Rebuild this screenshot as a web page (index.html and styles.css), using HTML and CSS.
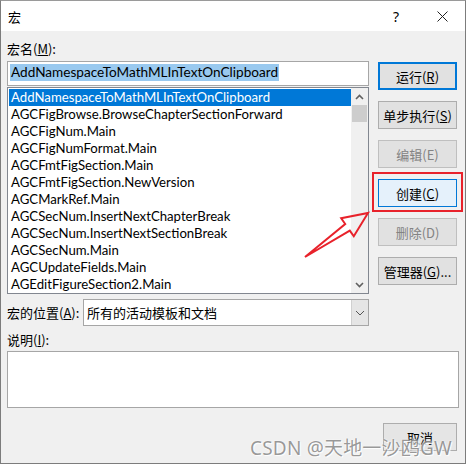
FILE: index.html
```html
<!DOCTYPE html>
<html>
<head>
<meta charset="utf-8">
<link rel="stylesheet" href="styles.css">
</head>
<body>
<div class="window">
  <div class="titlebar">
    <span class="title">宏</span>
    <span class="help">?</span>
    <span class="close"><svg width="11" height="11" viewBox="0 0 11 11"><path d="M0.5 0.5 L10.5 10.5 M10.5 0.5 L0.5 10.5" stroke="#222" stroke-width="1" fill="none"/></svg></span>
  </div>
  <div class="content">
    <div class="label top-label">宏名(<u>M</u>):</div>
    <div class="main">
      <div class="leftcol">
        <div class="input"><span class="sel">AddNamespaceToMathMLInTextOnClipboard</span></div>
        <div class="listbox">
          <div class="items">
            <div class="item selected">AddNamespaceToMathMLInTextOnClipboard</div>
            <div class="item">AGCFigBrowse.BrowseChapterSectionForward</div>
            <div class="item">AGCFigNum.Main</div>
            <div class="item">AGCFigNumFormat.Main</div>
            <div class="item">AGCFmtFigSection.Main</div>
            <div class="item">AGCFmtFigSection.NewVersion</div>
            <div class="item">AGCMarkRef.Main</div>
            <div class="item">AGCSecNum.InsertNextChapterBreak</div>
            <div class="item">AGCSecNum.InsertNextSectionBreak</div>
            <div class="item">AGCSecNum.Main</div>
            <div class="item">AGCUpdateFields.Main</div>
            <div class="item">AGEditFigureSection2.Main</div>
          </div>
          <div class="scrollbar">
            <div class="sb-btn"><svg width="9" height="6" viewBox="0 0 9 6"><path d="M1 5 L4.5 1.5 L8 5" stroke="#606060" stroke-width="1.6" fill="none"/></svg></div>
            <div class="sb-thumb"></div>
            <div class="sb-track"></div>
            <div class="sb-btn"><svg width="9" height="6" viewBox="0 0 9 6"><path d="M1 1 L4.5 4.5 L8 1" stroke="#606060" stroke-width="1.6" fill="none"/></svg></div>
          </div>
        </div>
      </div>
      <div class="rightcol">
        <div class="btn default">运行(<u>R</u>)</div>
        <div class="btn">单步执行(<u>S</u>)</div>
        <div class="btn disabled">编辑(E)</div>
        <div class="btn-wrap">
          <div class="btn hot">创建(<u>C</u>)</div>
          <div class="redbox"></div>
        </div>
        <div class="btn disabled">删除(D)</div>
        <div class="btn">管理器(<u>G</u>)...</div>
      </div>
    </div>
    <div class="locrow">
      <div class="label loc-label">宏的位置(<u>A</u>):</div>
      <div class="select">
        <span class="select-text">所有的活动模板和文档</span>
        <span class="select-btn"><svg width="10" height="6" viewBox="0 0 10 6"><path d="M1 1 L5 5 L9 1" stroke="#555" stroke-width="1" fill="none"/></svg></span>
      </div>
    </div>
    <div class="label desc-label">说明(<u>I</u>):</div>
    <div class="textarea"></div>
    <div class="bottomrow">
      <div class="btn cancel">取消</div>
    </div>
  </div>
  <svg class="arrow" width="466" height="464" viewBox="0 0 466 464">
    <polygon points="305,257 345.2,224 341.2,218.3 368,213 353.8,236.3 349.8,230.6" fill="none" stroke="#e8222b" stroke-width="2" stroke-linejoin="miter"/>
  </svg>
  <div class="watermark">CSDN @天地一沙鸥GW</div>
</div>
</body>
</html>
```

FILE: styles.css
```css
* { box-sizing: border-box; }
html, body { margin: 0; padding: 0; }
body {
  width: 466px;
  height: 464px;
  font-family: "Noto Sans CJK SC", sans-serif;
  color: #000;
  background: #fff;
}
u { text-decoration: underline; text-underline-offset: 1px; }
.window {
  position: relative;
  width: 466px;
  height: 464px;
  border: 1px solid #7c7c7c;
  border-top-color: #9a9a9a;
  background: #f0f0f0;
  overflow: hidden;
}
.titlebar {
  height: 30px;
  background: #fff;
  display: flex;
  align-items: center;
  font-size: 13px;
}
.title { margin-left: 7px; }
.help { margin-left: auto; margin-right: 38px; font-size: 14px; font-family: "Noto Sans", sans-serif; }
.close { margin-right: 17px; display: flex; }
.content {
  padding: 8px 7px 0 6px;
  font-size: 13px;
}
.label {
  font-size: 13px;
  line-height: 20px;
  height: 20px;
  white-space: nowrap;
}
.top-label { margin-bottom: 2px; }
.main {
  display: flex;
  gap: 9px;
}
.leftcol { width: 362px; display: flex; flex-direction: column; gap: 1px; }
.input {
  height: 25px;
  background: #fff;
  border: 1px solid #a6a6a6;
  padding: 2px 0 0 2px;
  font-family: Lato, "Noto Sans CJK SC", sans-serif;
  font-size: 13.6px;
  line-height: 17px;
  white-space: nowrap;
  overflow: hidden;
}
.sel { background: #99c9ef; display: inline-block; height: 17px; line-height: 17px; padding: 0 1px; }
.listbox {
  height: 207px;
  background: #fff;
  border: 1px solid #828790;
  display: flex;
  padding: 1px 0 0 1px;
}
.items { flex: 1; overflow: hidden; font-size: 13.2px; font-family: Lato, "Noto Sans CJK SC", sans-serif; }
.item {
  height: 17px;
  line-height: 17px;
  padding-left: 2px;
  white-space: nowrap;
}
.item.selected { background: #0078d7; color: #fff; }
.scrollbar {
  width: 17px;
  margin-top: -1px;
  display: flex;
  flex-direction: column;
  background: #f0f0f0;
}
.sb-btn { height: 17px; display: flex; align-items: center; justify-content: center; }
.sb-thumb { height: 17px; background: #cdcdcd; margin: 0 1px; }
.sb-track { flex: 1; }
.rightcol {
  width: 79px;
  padding-top: 1px;
  display: flex;
  flex-direction: column;
  gap: 11px;
}
.btn {
  height: 28px;
  background: #e1e1e1;
  border: 1px solid #adadad;
  display: flex;
  align-items: center;
  justify-content: center;
  font-size: 13px;
  white-space: nowrap;
}
.btn.default { border: 2px solid #0078d7; }
.btn.disabled { color: #838383; background: #e1e1e1; border-color: #bfbfbf; }
.btn.hot { background: #e5f1fb; border-color: #0078d7; }
.btn-wrap { position: relative; }
.redbox {
  position: absolute;
  left: -6px;
  right: -6px;
  top: -7px;
  bottom: -5px;
  border: 2px solid #e8222b;
}
.locrow {
  display: flex;
  align-items: center;
  margin-top: 5px;
  height: 27px;
}
.loc-label { width: 76px; }
.select {
  width: 286px;
  height: 27px;
  border: 1px solid #a6a6a6;
  background: #fff;
  display: flex;
  align-items: center;
}
.select-text { flex: 1; padding-left: 3px; font-size: 13px; }
.select-btn {
  width: 17px;
  height: 100%;
  background: #e5e5e5;
  border-left: 1px solid #d0d0d0;
  display: flex;
  align-items: center;
  justify-content: center;
}
.desc-label { margin-top: 4px; }
.textarea {
  margin-top: 1px;
  height: 57px;
  width: 452px;
  background: #fff;
  border: 1px solid #a6a6a6;
}
.bottomrow {
  display: flex;
  justify-content: flex-end;
  margin-top: 15px;
  padding-right: 1px;
}
.cancel { width: 74px; height: 28px; background: #e5e5e5; }
.arrow { position: absolute; left: -1px; top: -1px; pointer-events: none; }
.watermark {
  position: absolute;
  left: 249px;
  top: 432px;
  font-size: 19px;
  font-family: "Noto Sans", "Noto Sans CJK SC", sans-serif;
  color: rgba(120, 120, 120, 0.75);
  text-shadow: 0 0 2px #fff, 1px 1px 1px #fff;
  white-space: nowrap;
  letter-spacing: 0.2px;
}
```
